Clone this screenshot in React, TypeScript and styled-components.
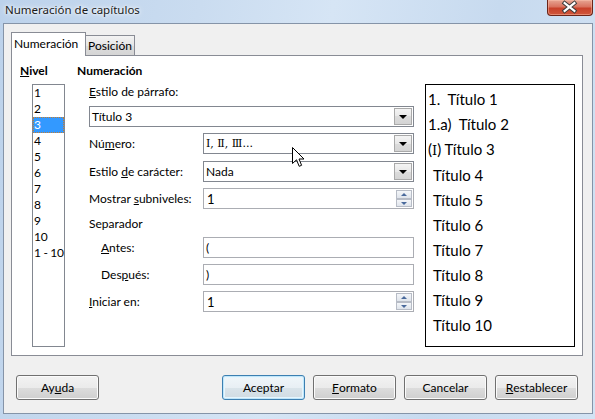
import React from 'react'
import styled, { createGlobalStyle, css } from 'styled-components'

const GlobalStyle = createGlobalStyle`
  html, body {
    margin: 0;
    padding: 0;
  }
  body {
    width: 595px;
    height: 419px;
    overflow: hidden;
    font-family: 'Lato', 'Noto Sans', 'DejaVu Sans', sans-serif;
    font-size: 12px;
    color: #000;
  }
  * {
    box-sizing: border-box;
  }
`

const LEVELS = ['1', '2', '3', '4', '5', '6', '7', '8', '9', '10', '1 - 10']

const PREVIEW = [
  { prefix: '1.\u00a0\u00a0', text: 'Título 1', roman: false },
  { prefix: '1.a)\u00a0\u00a0', text: 'Título 2', roman: false },
  { prefix: '', text: ' Título 3', roman: true },
  { prefix: '', text: 'Título 4', roman: false },
  { prefix: '', text: 'Título 5', roman: false },
  { prefix: '', text: 'Título 6', roman: false },
  { prefix: '', text: 'Título 7', roman: false },
  { prefix: '', text: 'Título 8', roman: false },
  { prefix: '', text: 'Título 9', roman: false },
  { prefix: '', text: 'Título 10', roman: false },
]

const App: React.FC = () => (
  <>
    <GlobalStyle />
    <Window>
      <TitleBar>
        <Title>Numeración de capítulos</Title>
        <CloseButton>
          <svg width="46" height="16" viewBox="0 0 46 16">
            <path d="M18 4 L28 12 M28 4 L18 12" stroke="#3b3b3b" strokeWidth="4.2" strokeLinecap="square" />
            <path d="M18 4 L28 12 M28 4 L18 12" stroke="#fff" strokeWidth="2.2" strokeLinecap="square" />
          </svg>
        </CloseButton>
      </TitleBar>

      <Client>
        <Body>
          <TabStrip>
            <Tab $active>Numeración</Tab>
            <Tab>Posición</Tab>
          </TabStrip>
          <Panel>
            <Heading>
              <u>N</u>ivel
            </Heading>
            <Heading>Numeración</Heading>
            <div />

            <LevelList>
              {LEVELS.map((l) => (
                <LevelItem key={l} $selected={l === '3'}>
                  {l}
                </LevelItem>
              ))}
            </LevelList>

            <Form>
              <Caption>
                <u>E</u>stilo de párrafo:
              </Caption>
              <Combo $mt={6}>
                <span>Título 3</span>
                <DropButton />
              </Combo>

              <Row $mt={6}>
                <Label>
                  Nú<u>m</u>ero:
                </Label>
                <Combo>
                  <Numerals>Ⅰ, Ⅱ, Ⅲ...</Numerals>
                  <DropButton />
                </Combo>
              </Row>
              <Row $mt={7}>
                <Label>
                  Estilo <u>d</u>e carácter:
                </Label>
                <Combo>
                  <span>Nada</span>
                  <DropButton />
                </Combo>
              </Row>
              <Row $mt={6}>
                <Label>
                  Mostrar <u>s</u>ubniveles:
                </Label>
                <Spin>
                  <span>1</span>
                  <SpinButtons>
                    <SpinHalf $up />
                    <SpinHalf />
                  </SpinButtons>
                </Spin>
              </Row>

              <Caption $mt={7}>Separador</Caption>
              <Row $mt={5}>
                <Label $indent>
                  <u>A</u>ntes:
                </Label>
                <TextField>(</TextField>
              </Row>
              <Row $mt={6}>
                <Label $indent>
                  Des<u>p</u>ués:
                </Label>
                <TextField>)</TextField>
              </Row>
              <Row $mt={6}>
                <Label>
                  <u>I</u>niciar en:
                </Label>
                <Spin>
                  <span>1</span>
                  <SpinButtons>
                    <SpinHalf $up />
                    <SpinHalf />
                  </SpinButtons>
                </Spin>
              </Row>
            </Form>

            <Preview>
              {PREVIEW.map((p, i) => (
                <PreviewLine key={p.text} $indent={i > 2}>
                  {p.prefix}
                  {p.roman && (
                    <>
                      (<PreviewRoman>Ⅰ</PreviewRoman>)
                    </>
                  )}
                  {p.text}
                </PreviewLine>
              ))}
            </Preview>
          </Panel>
        </Body>

        <Footer>
          <Button>
            Ay<u>u</u>da
          </Button>
          <ButtonGroup>
            <Button $default>Aceptar</Button>
            <Button>
              <u>F</u>ormato
            </Button>
            <Button>Cancelar</Button>
            <Button>
              <u>R</u>establecer
            </Button>
          </ButtonGroup>
        </Footer>
      </Client>

      <Cursor width="13" height="21" viewBox="0 0 13 21">
        <path
          d="M0.5 0.5 L0.5 16.5 L4.5 12.8 L7.2 19.3 L9.6 18.3 L7 12 L12 12 Z"
          fill="#fff"
          stroke="#000"
          strokeWidth="1"
          strokeLinejoin="miter"
        />
      </Cursor>
    </Window>
  </>
)

const Window = styled.div`
  position: relative;
  width: 595px;
  height: 419px;
  display: flex;
  flex-direction: column;
  padding: 0 2px 5px 3px;
  background: linear-gradient(
    100deg,
    #bcd2eb 0%,
    #cadcf0 30%,
    #d6e5f5 50%,
    #c7daef 75%,
    #d3e3f4 100%
  );
`

const TitleBar = styled.div`
  height: 23px;
  display: flex;
  align-items: flex-start;
`

const Title = styled.div`
  padding: 2px 0 0 2px;
  font-family: 'Noto Sans', 'DejaVu Sans', sans-serif;
  font-size: 11.5px;
  color: #1b1b1b;
  text-shadow: 0 0 6px #fff, 0 0 3px #fff;
`

const CloseButton = styled.div`
  margin-left: auto;
  width: 46px;
  height: 16px;
  border: 1px solid #6b2418;
  border-top: none;
  border-radius: 0 0 4px 4px;
  background: linear-gradient(#e7a593 0%, #d9735f 45%, #c8412a 55%, #d0573c 100%);
  box-shadow: inset 0 0 0 1px rgba(255, 200, 180, 0.45);
  display: flex;
  svg {
    display: block;
    margin: -1px 0 0 -1px;
  }
`

const Client = styled.div`
  flex: 1;
  display: flex;
  flex-direction: column;
  border: 1px solid #8594a8;
  background: #f0f0f0;
`

const Body = styled.div`
  padding: 8px 8px 0 7px;
`

const TabStrip = styled.div`
  position: relative;
  z-index: 1;
  height: 24px;
  margin-bottom: -1px;
  display: flex;
  align-items: flex-end;
`

const Tab = styled.div<{ $active?: boolean }>`
  border: 1px solid #898c95;
  padding-left: 2px;
  line-height: 20px;
  ${(p) =>
    p.$active
      ? css`
          width: 75px;
          height: 24px;
          border-bottom: none;
          background: #fff;
          padding-top: 1px;
        `
      : css`
          width: 49px;
          height: 21px;
          border-left: none;
          background: linear-gradient(#f3f3f3, #e6e6e6 50%, #dcdcdc 50%, #d5d5d5);
          line-height: 19px;
        `}
`

const Panel = styled.div`
  width: 572px;
  height: 301px;
  border: 1px solid #898c95;
  background: #fff;
  padding: 7px 0 0 8px;
  display: grid;
  grid-template-columns: 57px 348px 150px;
  grid-template-rows: 21px 263px;
`

const Heading = styled.div`
  font-weight: 700;
  line-height: 16px;
`

const LevelList = styled.div`
  margin-left: 12px;
  width: 33px;
  border: 1px solid #828790;
  background: #fff;
`

const LevelItem = styled.div<{ $selected?: boolean }>`
  height: 16px;
  line-height: 16px;
  padding-left: 1px;
  white-space: nowrap;
  letter-spacing: -0.3px;
  ${(p) =>
    p.$selected &&
    css`
      background: #3399ff;
      color: #fff;
      outline: 1px dotted #c27d33;
      outline-offset: -1px;
    `}
`

const Form = styled.div`
  display: flex;
  flex-direction: column;
  padding: 0 11px 0 12px;
`

const Caption = styled.div<{ $mt?: number }>`
  height: 16px;
  line-height: 16px;
  margin-top: ${(p) => p.$mt ?? 0}px;
`

const Row = styled.div<{ $mt?: number }>`
  display: grid;
  grid-template-columns: 114px 211px;
  align-items: center;
  margin-top: ${(p) => p.$mt ?? 0}px;
`

const Label = styled.div<{ $indent?: boolean }>`
  padding-left: ${(p) => (p.$indent ? 12 : 0)}px;
  white-space: nowrap;
`

const FieldBase = css`
  height: 21px;
  display: flex;
  align-items: center;
  background: #fff;
  white-space: nowrap;
`

const Combo = styled.div<{ $mt?: number }>`
  ${FieldBase};
  margin-top: ${(p) => p.$mt ?? 0}px;
  border: 1px solid #828790;
  padding: 0 1px 0 2px;
  justify-content: space-between;
`

const Numerals = styled.span`
  font-family: 'DejaVu Serif', 'Liberation Serif', serif;
  font-size: 11px;
`

const DropButton = styled.div`
  width: 18px;
  height: 17px;
  border: 1px solid #a9a9a9;
  background: linear-gradient(#f4f4f4, #e8e8e8 50%, #dcdcdc 50%, #d4d4d4);
  position: relative;
  &::after {
    content: '';
    position: absolute;
    left: 4px;
    top: 6px;
    border-left: 4px solid transparent;
    border-right: 4px solid transparent;
    border-top: 4px solid #000;
  }
`

const Spin = styled.div`
  ${FieldBase};
  border: 1px solid #abadb3;
  padding: 0 1px 0 3px;
  justify-content: space-between;
  font-size: 13px;
`

const SpinButtons = styled.div`
  width: 16px;
  height: 17px;
  display: flex;
  flex-direction: column;
`

const SpinHalf = styled.div<{ $up?: boolean }>`
  flex: 1;
  border: 1px solid #b7bcc6;
  background: linear-gradient(#f4f6f9, #dfe4eb);
  position: relative;
  &::after {
    content: '';
    position: absolute;
    left: 4px;
    top: 2px;
    border-left: 3px solid transparent;
    border-right: 3px solid transparent;
    ${(p) =>
      p.$up
        ? css`
            border-bottom: 3px solid #4a6a9c;
          `
        : css`
            border-top: 3px solid #4a6a9c;
          `}
  }
`

const TextField = styled.div`
  ${FieldBase};
  border: 1px solid #abadb3;
  padding-left: 2px;
`

const Preview = styled.div`
  border: 1px solid #000;
  background: #fff;
  padding: 2px 0 0 2px;
  font-size: 15px;
  line-height: 25px;
`

const PreviewLine = styled.div<{ $indent?: boolean }>`
  padding-left: ${(p) => (p.$indent ? 5 : 0)}px;
  white-space: pre;
`

const PreviewRoman = styled.span`
  font-family: 'DejaVu Serif', 'Liberation Serif', serif;
  font-size: 13px;
`

const Footer = styled.div`
  margin-top: 19px;
  padding: 0 14px 0 12px;
  display: flex;
  justify-content: space-between;
`

const ButtonGroup = styled.div`
  display: flex;
  gap: 8px;
`

const Button = styled.div<{ $default?: boolean }>`
  width: 83px;
  height: 25px;
  border: 1px solid #707070;
  border-radius: 3px;
  display: flex;
  align-items: center;
  justify-content: center;
  background: linear-gradient(#f2f2f2 0%, #ebebeb 50%, #dddddd 50%, #cfcfcf 100%);
  box-shadow: inset 0 0 0 1px #fbfbfb;
  ${(p) =>
    p.$default &&
    css`
      border-color: #3c7fb1;
      box-shadow: inset 0 0 0 1px #c0e6fa, inset 0 0 0 2px #e6f5fd;
      background: linear-gradient(#f0f6fa 0%, #e8eff4 50%, #dae4ea 50%, #cfdbe3 100%);
    `}
`

const Cursor = styled.svg`
  position: absolute;
  left: 292px;
  top: 147px;
`

export default App
